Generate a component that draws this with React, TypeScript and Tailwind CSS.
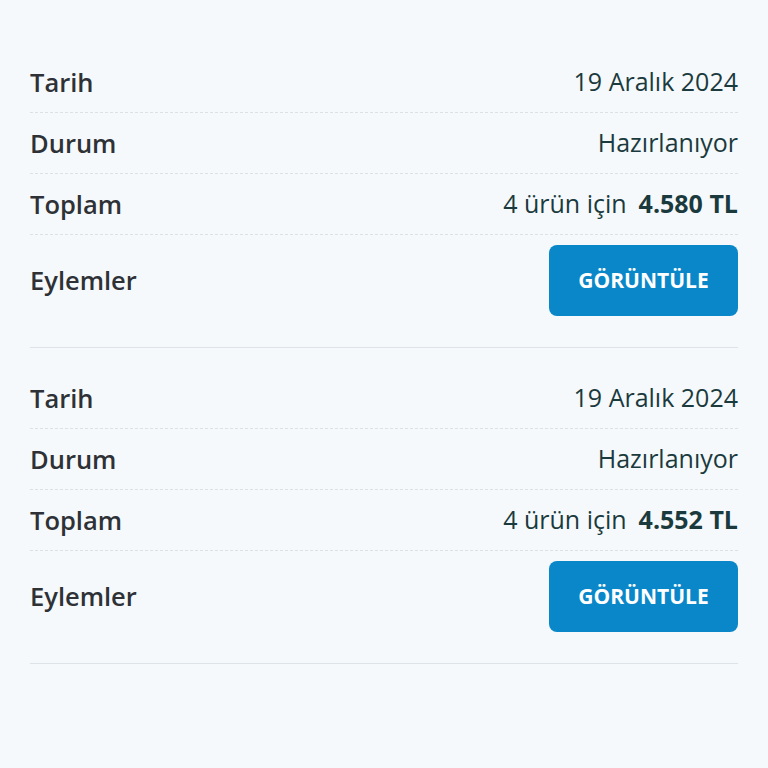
import React from "react";

type Order = { date: string; status: string; count: number; total: string };

const orders: Order[] = [
  { date: "19 Aralık 2024", status: "Hazırlanıyor", count: 4, total: "4.580 TL" },
  { date: "19 Aralık 2024", status: "Hazırlanıyor", count: 4, total: "4.552 TL" },
];

function Row({ label, children }: { label: string; children: React.ReactNode }) {
  return (
    <div className="flex h-[61px] items-center justify-between border-b border-dashed border-[#dce1e6]">
      <span className="text-[25.5px] font-semibold text-[#2e3135]">{label}</span>
      <span className="text-[25px] font-normal text-[#1b3a3d]">{children}</span>
    </div>
  );
}

export default function App() {
  return (
    <div
      className="min-h-[768px] w-full bg-[#f5f9fc] px-[30px] pt-[32px]"
      style={{ fontFamily: '"Open Sans", "Noto Sans", sans-serif' }}
    >
      {orders.map((o, i) => (
        <div key={i} className="border-b border-[#dde3e8] pt-[20px]">
          <Row label="Tarih">{o.date}</Row>
          <Row label="Durum">{o.status}</Row>
          <Row label="Toplam">
            <span className="flex items-center gap-[12px]">
              <span>{o.count} ürün için</span>
              <span className="font-bold">{o.total}</span>
            </span>
          </Row>
          <div className="flex items-center justify-between pt-[10px] pb-[31px]">
            <span className="text-[25.5px] font-semibold text-[#2e3135]">Eylemler</span>
            <button className="flex h-[71px] w-[189px] items-center justify-center rounded-[8px] bg-[#0a87c9] text-[21px] font-bold text-white">
              GÖRÜNTÜLE
            </button>
          </div>
        </div>
      ))}
    </div>
  );
}
